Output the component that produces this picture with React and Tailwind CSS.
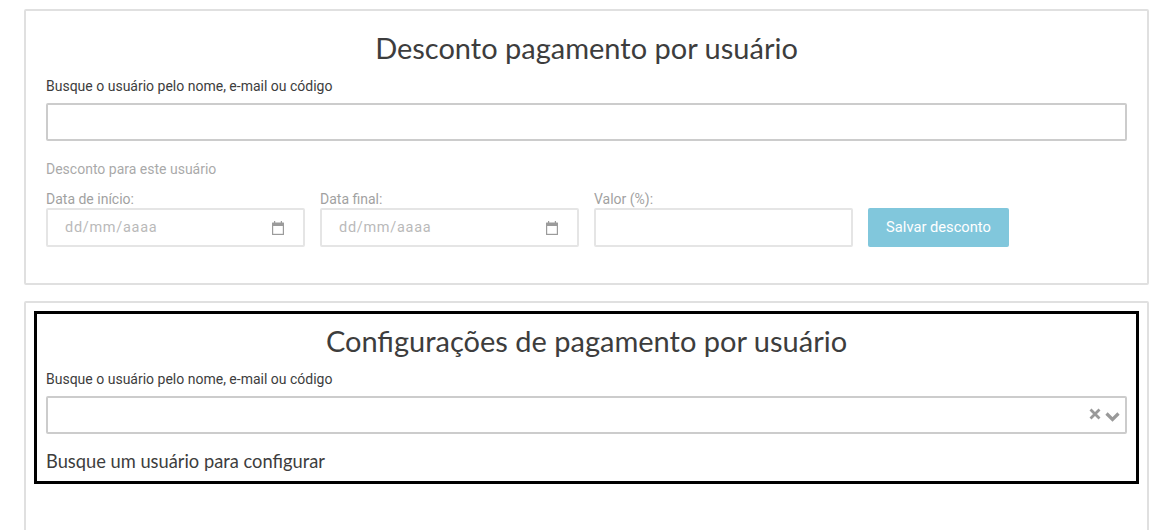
import React from "react";

const roboto = "font-['Roboto','Liberation_Sans',sans-serif]";
const titleFont = "font-['Lato','Open_Sans',sans-serif]";

const CalendarIcon = () => (
  <svg width="12" height="14" viewBox="0 0 12 14">
    <path fill="#3a3a3a" d="M2 0h1.200v1.500h5.600V0H10v1.500h1.500a.5.5 0 0 1 .5.5v11.500a.5.5 0 0 1-.5.5H.5a.5.5 0 0 1-.5-.5V2a.5.5 0 0 1 .5-.5H2V0Z" />
    <rect x="1.200" y="5" width="9.600" height="7.800" fill="#fff" />
  </svg>
);

const DateField = ({ label }) => (
  <div className="flex w-[259px] flex-col">
    <label className="h-[17px] text-sm leading-[17px] text-[#444]">{label}</label>
    <div className="flex h-[39px] items-center justify-between rounded-[2px] border-2 border-[#ccc] pl-[17px] pr-[19px] text-[14.5px] tracking-[0.7px] text-[#757575]">
      <span>dd/mm/aaaa</span>
      <CalendarIcon />
    </div>
  </div>
);

const App = () => {
  return (
    <div className={`${roboto} flex h-[530px] flex-col gap-4 overflow-hidden bg-white pl-6 pt-[9px] text-[#3d3d3d]`}>
      <section className="h-[276px] w-[1125px] shrink-0 rounded-[2px] border-2 border-[#e0e0e0] px-5 pt-[16px]">
        <h2 className={`${titleFont} h-[42px] text-center text-[29px] leading-[42px] text-[#3d3d3d]`}>
          Desconto pagamento por usuário
        </h2>
        <p className="mt-[7px] h-[20px] text-sm leading-[20px]">Busque o usuário pelo nome, e-mail ou código</p>
        <div className="mt-[7px] h-[38px] rounded-[2px] border-2 border-[#ccc]" />

        <div className="opacity-50">
          <p className="mt-[18px] h-5 text-sm leading-5 text-[#555]">Desconto para este usuário</p>
          <div className="mt-[12px] flex items-end gap-[15px]">
            <DateField label="Data de início:" />
            <DateField label="Data final:" />
            <div className="flex w-[259px] flex-col">
              <label className="h-[17px] text-sm leading-[17px] text-[#444]">Valor (%):</label>
              <div className="h-[39px] rounded-[2px] border-2 border-[#ccc]" />
            </div>
            <button className="h-[39px] w-[141px] rounded-[2px] bg-[#0690bb] text-[14.7px] text-white">Salvar desconto</button>
          </div>
        </div>
      </section>

      <section className="h-[260px] w-[1125px] shrink-0 rounded-[2px] border-2 border-[#e0e0e0] px-2 pt-2">
        <div className="h-[173px] border-[3px] border-black px-[9px] pt-[6px]">
          <h2 className={`${titleFont} h-[42px] text-center text-[29px] leading-[42px] text-[#3d3d3d]`}>
            Configurações de pagamento por usuário
          </h2>
          <p className="mt-[7px] h-[20px] text-sm leading-[20px]">Busque o usuário pelo nome, e-mail ou código</p>
          <div className="mt-[7px] flex h-[38px] items-center justify-end gap-[4px] rounded-[2px] border-2 border-[#ccc] pr-[5px]">
            <svg width="12" height="12" viewBox="0 0 12 12" className="mb-[3px]">
              <path d="M1.500 1.500 10.500 10.500M10.500 1.500 1.500 10.500" stroke="#999" strokeWidth="2.800" fill="none" />
            </svg>
            <svg width="15" height="10" viewBox="0 0 15 10" className="mt-[3px]">
              <path d="M1.500 1.500 7.500 7.500 13.500 1.500" stroke="#999" strokeWidth="3.200" fill="none" />
            </svg>
          </div>
          <p className={`${titleFont} mt-[15px] text-[18.3px] leading-6`}>Busque um usuário para configurar</p>
        </div>
      </section>
    </div>
  );
};

export default App;
